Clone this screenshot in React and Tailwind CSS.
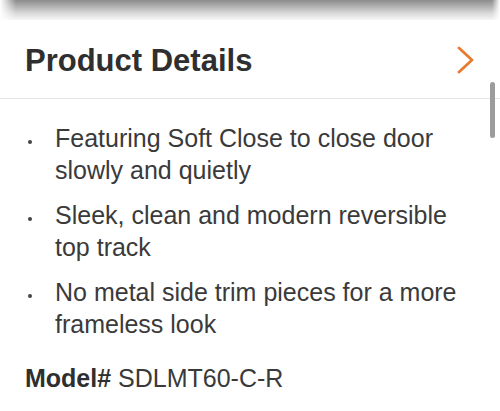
export default function App() {
  const items = [
    "Featuring Soft Close to close door slowly and quietly",
    "Sleek, clean and modern reversible top track",
    "No metal side trim pieces for a more frameless look",
  ];
  return (
    <div className="relative w-[500px] h-[411px] overflow-hidden bg-white font-['Liberation_Sans',Arial,sans-serif] text-[#3a3a3a]">
      <div className="relative h-5 bg-linear-to-b from-[#8c8c8c] via-[#d8d8d8] via-65% to-[#f6f6f6]">
        <div className="absolute inset-y-0 left-0 w-4 bg-linear-to-r from-white to-transparent" />
        <div className="absolute inset-y-0 right-0 w-2 bg-linear-to-l from-white to-transparent" />
      </div>
      <div className="flex items-center justify-between pl-[25px] pr-[26px] pt-[23px] pb-[19px] border-b border-[#e6e6e6]">
        <h2 className="text-[31px] leading-[36px] font-bold text-[#2f2f2f]">Product Details</h2>
        <svg width="17" height="28" viewBox="0 0 17 28" className="-mt-[2px]">
          <path d="M2 2 L15 14 L2 26" fill="none" stroke="#e67c33" strokeWidth="2.8" strokeLinecap="round" strokeLinejoin="round" />
        </svg>
      </div>
      <ul className="flex flex-col gap-[13px] pt-[23px] pr-[25px]">
        {items.map((t) => (
          <li key={t} className="flex text-[25px] leading-[32px]">
            <span className="w-[55px] shrink-0 flex justify-end pr-[23px] pt-[18px]">
              <span className="block w-[4px] h-[4px] rounded-full bg-[#444444]" />
            </span>
            <span>{t}</span>
          </li>
        ))}
      </ul>
      <p className="mt-[22px] pl-[25px] text-[25px] leading-[32px]">
        <span className="font-bold text-[#2f2f2f]">Model#</span> SDLMT60-C-R
      </p>
      <div className="absolute right-[5px] top-[82px] w-[5px] h-[56px] rounded-full bg-[#9c9c9c]" />
    </div>
  );
}
